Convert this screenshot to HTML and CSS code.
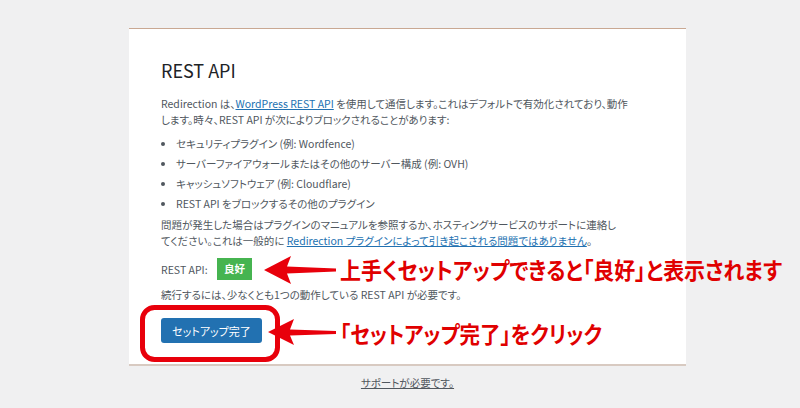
FILE: index.html
```html
<!DOCTYPE html>
<html lang="ja">

<head>
    <meta charset="UTF-8">
    <meta name="viewport" content="width=device-width, initial-scale=1.0">
    <title>Redirection セットアップ</title>
    <link rel="stylesheet" href="styles.css">
</head>

<body>
    <div class="page">
        <div class="wizard">
            <h2>REST API</h2>
            <p>Redirection は、<a href="#">WordPress REST API</a> を使用して通信します。これはデフォルトで有効化されており、動作します。時々、REST API が次によりブロックされることがあります:</p>
            <ul>
                <li>セキュリティプラグイン (例: Wordfence)</li>
                <li>サーバーファイアウォールまたはその他のサーバー構成 (例: OVH)</li>
                <li>キャッシュソフトウェア (例: Cloudflare)</li>
                <li>REST API をブロックするその他のプラグイン</li>
            </ul>
            <p class="help">問題が発生した場合はプラグインのマニュアルを参照するか、ホスティングサービスのサポートに連絡してください。これは一般的に <a href="#">Redirection プラグインによって引き起こされる問題ではありません</a>。</p>
            <div class="api-status">
                <span class="api-label">REST API:</span>
                <span class="badge">良好</span>
            </div>
            <p class="continue">続行するには、少なくとも1つの動作している REST API が必要です。</p>
            <div class="actions">
                <button class="button-primary">セットアップ完了</button>
            </div>
        </div>
        <p class="support"><a href="#">サポートが必要です。</a></p>
    </div>

    <!-- annotations drawn over the screenshot -->
    <svg class="notes" width="800" height="408" viewBox="0 0 800 408">
        <rect class="note-box" x="142.5" y="307.5" width="135" height="52" rx="12" />
        <polygon class="note-arrow" points="264,270 291,256 287,266.5 336,268.5 336,271.5 287,273.5 291,284" />
        <polygon class="note-arrow" points="268,332 294,319 290,329.5 336,331 336,334 290,335.5 294,345" />
        <text class="note-text" x="340" y="279" textLength="442" lengthAdjust="spacingAndGlyphs">上手くセットアップできると「良好」と表示されます</text>
        <text class="note-text" x="340" y="343" textLength="262" lengthAdjust="spacingAndGlyphs">「セットアップ完了」をクリック</text>
    </svg>
</body>

</html>
```

FILE: styles.css
```css
body {
    font-family: "Noto Sans CJK JP", "Noto Sans", sans-serif;
    font-size: 10.5px;
    font-feature-settings: "palt";
    color: #50575e;
    margin: 0;
    padding: 0;
    background-color: #f0f0f1;
    position: relative;
    height: 408px;
    overflow: hidden;
}

a {
    color: #2271b1;
    text-decoration: underline;
}

.page {
    width: 557px;
    margin-left: 129px;
    padding-top: 28px;
}

.wizard {
    background-color: #fff;
    border-top: 1px solid #c9a893;
    border-bottom: 2px solid #d8cac1;
    padding: 27px 32px 21px;
}

.wizard h2 {
    font-size: 18px;
    font-weight: 400;
    line-height: 28px;
    color: #1d2327;
    margin: 0 0 12px;
}

.wizard p {
    max-width: 467px;
    line-height: 16px;
    margin: 0;
}

.wizard p.help {
    max-width: 458px;
}

.wizard ul {
    margin: 8px 0 5px;
    padding-left: 15px;
    list-style: disc;
}

.wizard li {
    line-height: 16px;
}

.wizard li + li {
    margin-top: 4px;
}

.api-status {
    display: flex;
    align-items: center;
    margin-top: 9px;
}

.api-label {
    width: 56px;
}

.badge {
    background-color: #46b450;
    color: #fff;
    font-weight: 700;
    height: 22px;
    line-height: 22px;
    padding: 0 7px;
}

.wizard p.continue {
    margin-top: 7px;
}

.actions {
    margin-top: 15px;
}

.button-primary {
    font-family: inherit;
    font-size: 11px;
    font-feature-settings: "palt";
    background-color: #2271b1;
    color: #fff;
    border: none;
    border-radius: 3px;
    height: 25px;
    width: 101px;
    padding: 0;
    cursor: pointer;
}

.support {
    text-align: center;
    margin: 9px 0 0;
    line-height: 16px;
}

.support a {
    color: #50575e;
}

.notes {
    position: absolute;
    top: 0;
    left: 0;
    pointer-events: none;
}

.note-box {
    fill: none;
    stroke: #e8000b;
    stroke-width: 5;
}

.note-arrow {
    fill: #e8000b;
}

.note-text {
    fill: #e00000;
    font-family: "Noto Sans CJK JP", sans-serif;
    font-size: 23px;
    font-weight: 700;
}
```
